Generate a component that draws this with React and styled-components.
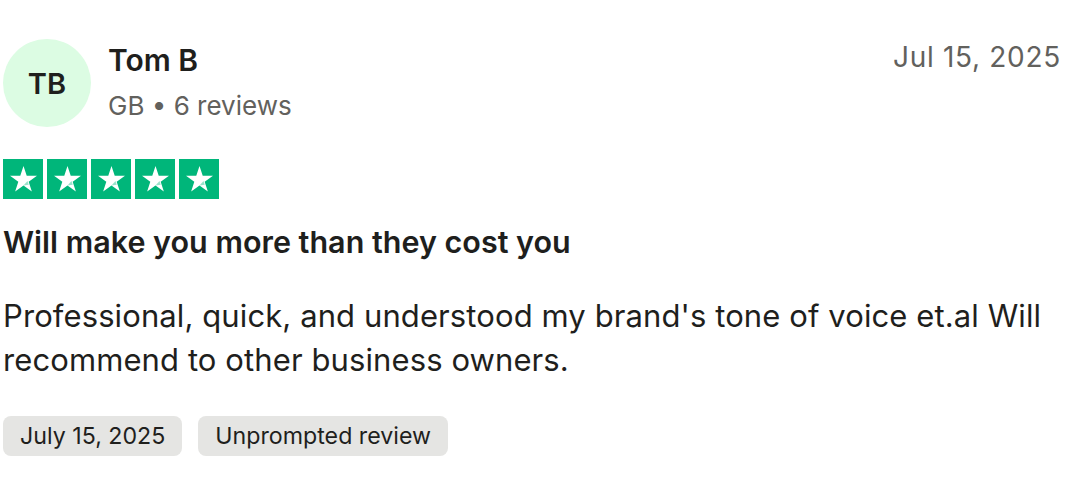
import React from "react";
import styled, { createGlobalStyle } from "styled-components";

const GlobalStyle = createGlobalStyle`
  body {
    margin: 0;
    background: #ffffff;
    font-family: Inter, "Liberation Sans", sans-serif;
    color: #1f1f1d;
  }
`;

const Card = styled.article`
  width: 1058px;
  padding: 39px 0 0 3px;
`;

const Header = styled.header`
  display: flex;
  align-items: flex-start;
`;

const Avatar = styled.div`
  width: 88px;
  height: 88px;
  border-radius: 50%;
  background: #dcfce3;
  display: flex;
  align-items: center;
  justify-content: center;
  font-size: 29px;
  font-weight: 600;
  color: #1f1f1d;
  flex-shrink: 0;
`;

const Consumer = styled.div`
  display: flex;
  flex-direction: column;
  margin-left: 17px;
  padding-top: 3px;
`;

const Name = styled.span`
  font-size: 30px;
  font-weight: 600;
  line-height: 36px;
`;

const Meta = styled.span`
  font-size: 26px;
  line-height: 36px;
  margin-top: 10px;
  color: #62615d;
`;

const PostedAt = styled.time`
  margin-left: auto;
  font-size: 28px;
  line-height: 36px;
  letter-spacing: 0.7px;
  color: #62615d;
`;

const Stars = styled.div`
  display: flex;
  gap: 4px;
  margin-top: 32px;
`;

const StarBox = styled.span`
  width: 40px;
  height: 40px;
  background: #00b67a;
  display: flex;
  align-items: center;
  justify-content: center;
`;

const Title = styled.h2`
  margin: 21px 0 0;
  font-size: 30.5px;
  font-weight: 600;
  line-height: 44px;
`;

const Body = styled.p`
  margin: 30px 0 0;
  font-size: 31px;
  line-height: 44px;
  letter-spacing: 0.1px;
  font-weight: 400;
`;

const Tags = styled.div`
  display: flex;
  gap: 16px;
  margin-top: 34px;
`;

const Tag = styled.span`
  display: inline-flex;
  align-items: center;
  height: 40px;
  padding: 0 17px;
  border-radius: 8px;
  background: #e5e5e3;
  font-size: 23.2px;
  color: #1f1f1d;
`;

function Star() {
  return (
    <StarBox>
      <svg width="33" height="33" viewBox="0 0 24 24">
        <path
          fill="#ffffff"
          d="M12 2.2l2.35 7.1h7.45l-6.03 4.38 2.3 7.12L12 16.4l-6.07 4.4 2.3-7.12L2.2 9.3h7.45z"
        />
        <path fill="#00b67a" d="M14.9 13.1l0.9 2.7L12 16.4z" opacity="0.4" />
      </svg>
    </StarBox>
  );
}

export default function App() {
  return (
    <>
      <GlobalStyle />
      <Card>
        <Header>
          <Avatar>TB</Avatar>
          <Consumer>
            <Name>Tom B</Name>
            <Meta>GB • 6 reviews</Meta>
          </Consumer>
          <PostedAt>Jul 15, 2025</PostedAt>
        </Header>
        <Stars>
          {[0, 1, 2, 3, 4].map((i) => (
            <Star key={i} />
          ))}
        </Stars>
        <Title>Will make you more than they cost you</Title>
        <Body>
          Professional, quick, and understood my brand's tone of voice et.al Will
          recommend to other business owners.
        </Body>
        <Tags>
          <Tag>July 15, 2025</Tag>
          <Tag>Unprompted review</Tag>
        </Tags>
      </Card>
    </>
  );
}
